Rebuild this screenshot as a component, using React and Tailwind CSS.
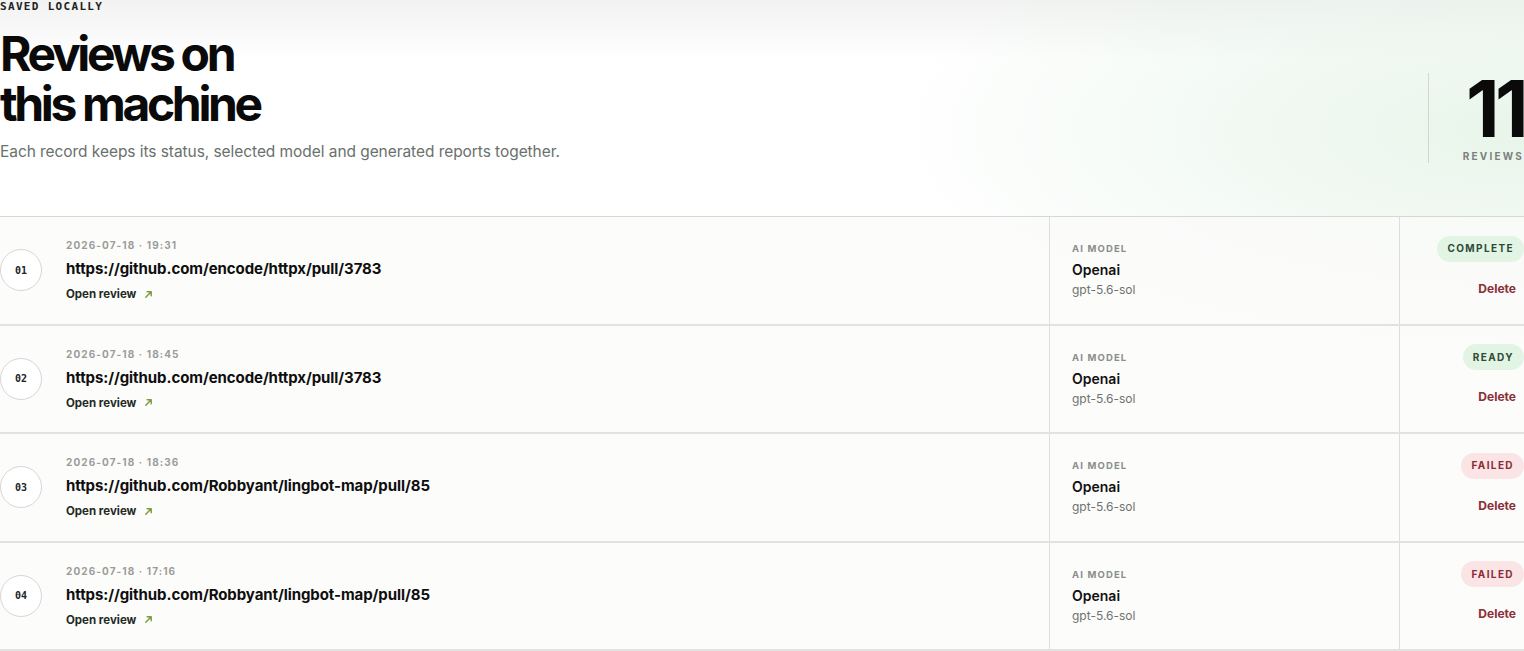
import React from "react";

const rows = [
  { n: "01", date: "2026-07-18 · 19:31", url: "https://github.com/encode/httpx/pull/3783", status: "COMPLETE" },
  { n: "02", date: "2026-07-18 · 18:45", url: "https://github.com/encode/httpx/pull/3783", status: "READY" },
  { n: "03", date: "2026-07-18 · 18:36", url: "https://github.com/Robbyant/lingbot-map/pull/85", status: "FAILED" },
  { n: "04", date: "2026-07-18 · 17:16", url: "https://github.com/Robbyant/lingbot-map/pull/85", status: "FAILED" },
];

function Pill({ status }) {
  if (status === "FAILED") {
    return (
      <span className="inline-flex h-[26px] items-center rounded-full bg-[#fbe4e6] px-[10px] text-[10px] font-bold tracking-[0.14em] text-[#8a2b36]">
        {status}
      </span>
    );
  }
  return (
    <span className="inline-flex h-[26px] items-center rounded-full bg-[#e2f5e5] px-[10px] text-[10px] font-bold tracking-[0.14em] text-[#2c4a34]">
      {status}
    </span>
  );
}

function Arrow() {
  return (
    <svg width="9" height="9" viewBox="0 0 10 10" className="ml-[8px]" fill="none">
      <path d="M2 8 L8 2 M3.5 2 H8 V6.5" stroke="#7c9b3c" strokeWidth="1.6" strokeLinecap="round" strokeLinejoin="round" />
    </svg>
  );
}

export default function App() {
  return (
    <div
      className="min-h-[651px] w-full overflow-hidden bg-white bg-[radial-gradient(ellipse_70%_60%_at_100%_20%,rgba(226,242,229,0.8),rgba(255,255,255,0)_60%),linear-gradient(to_bottom,#f1f2f1,#ffffff_60px)] text-[#111]"
      style={{ fontFamily: "Inter, 'Noto Sans', 'Liberation Sans', sans-serif" }}
    >
      <header className="flex items-end justify-between">
        <div>
          <div
            className="pt-px text-[11px] font-bold leading-[12px] tracking-[0.12em] text-[#222]"
            style={{ fontFamily: "'DejaVu Sans Mono', 'Liberation Mono', monospace" }}
          >
            SAVED LOCALLY
          </div>
          <h1 className="mt-[16px] text-[48px] font-bold leading-[50px] tracking-[-0.07em] text-[#0a0a0a]">
            Reviews on
            <br />
            this machine
          </h1>
          <p className="mt-[11px] text-[15.5px] leading-[24px] tracking-[-0.004em] text-[#6a706c]">
            Each record keeps its status, selected model and generated reports together.
          </p>
        </div>
        <div className="mb-px flex h-[90px] flex-col items-end justify-end border-l border-[#d4d6d4] pl-[34px]">
          <div className="text-[78px] font-bold leading-[78px] tracking-[-0.06em] text-[#0a0a0a]">11</div>
          <div className="mt-px text-[10px] font-bold leading-[14px] tracking-[0.22em] text-[#7b807c]">REVIEWS</div>
        </div>
      </header>

      <div className="mt-[52px] border-t border-[#d6d7d6]">
        {rows.map((r) => (
          <div key={r.n} className="flex h-[108.5px] border-b-2 border-[#e1e2e1] bg-[rgba(251,251,249,0.75)]">
            <div className="flex w-[1050px] items-center border-r border-[#dcdddc]">
              <div
                className="flex h-[42px] w-[42px] items-center justify-center rounded-full border border-[#d6d7d6] bg-white text-[10px] font-bold text-[#222]"
                style={{ fontFamily: "'DejaVu Sans Mono', 'Liberation Mono', monospace" }}
              >
                {r.n}
              </div>
              <div className="ml-[24px] flex flex-col">
                <div className="text-[10px] font-bold leading-[14px] tracking-[0.11em] text-[#9a9c9a]">{r.date}</div>
                <div className="mt-[7px] text-[15px] font-bold leading-[20px] tracking-[-0.005em] text-[#0e0e0e]">{r.url}</div>
                <div className="mt-[7px] flex items-center text-[11.5px] font-bold leading-[16px] text-[#1f2a24]">
                  Open review
                  <Arrow />
                </div>
              </div>
            </div>
            <div className="flex w-[350px] flex-col justify-center border-r border-[#dcdddc] pl-[22px]">
              <div className="text-[9.5px] font-bold leading-[14px] tracking-[0.12em] text-[#8b8d8b]">AI MODEL</div>
              <div className="mt-[5px] text-[14px] font-semibold leading-[18px] text-[#111]">Openai</div>
              <div className="mt-[3px] text-[12px] leading-[16px] text-[#6f726f]">gpt-5.6-sol</div>
            </div>
            <div className="flex flex-1 flex-col items-end justify-center gap-[19px] pb-[8px]">
              <Pill status={r.status} />
              <button className="pr-[8px] text-[12px] font-bold leading-[16px] text-[#8b2e36]">Delete</button>
            </div>
          </div>
        ))}
      </div>
    </div>
  );
}
